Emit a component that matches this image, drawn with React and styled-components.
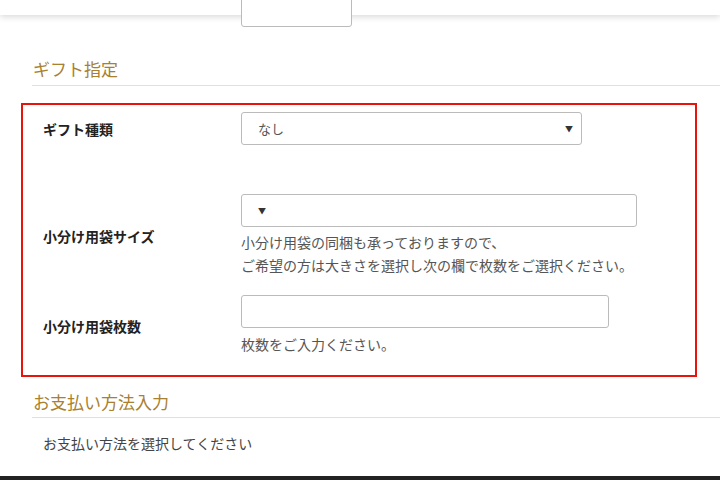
import React from "react";
import styled, { createGlobalStyle } from "styled-components";

const G = createGlobalStyle`
  body{margin:0;background:#fff;font-family:"Noto Sans CJK JP","Noto Sans",sans-serif;overflow:hidden;}
`;
const Page = styled.div`width:720px;height:480px;position:relative;overflow:hidden;`;
const TopBar = styled.div`height:15px;background:#fff;box-shadow:0 2px 6px rgba(0,0,0,.15);position:relative;z-index:1;`;
const TopSel = styled.div`position:absolute;left:241px;top:-12px;width:111px;height:39px;border:1px solid #bbb;border-radius:3px;box-sizing:border-box;background:#fff;`;
const Heading = styled.h2`
  margin:${p=>p.mt}px 0 0 32px;padding:0 0 0 1px;height:${p=>p.h}px;border-bottom:1px solid #e3e0da;
  font-family:"Noto Sans CJK JP",serif;font-weight:400;font-size:17px;color:#a8802f;line-height:${p=>p.h}px;
`;
const Box = styled.div`margin:17px 23px 0 21px;height:274px;border:2px solid #e8140c;box-sizing:border-box;
  display:flex;flex-direction:column;`;
const Row = styled.div`display:grid;grid-template-columns:218px 1fr;align-items:center;margin-top:${p=>p.mt}px;`;
const Label = styled.div`padding-left:20px;font-weight:700;font-size:14px;color:#222;`;
const Field = styled.div`display:flex;flex-direction:column;align-items:flex-start;`;
const Select = styled.div`width:${p=>p.w}px;height:33px;border:1px solid #bbb;border-radius:3px;box-sizing:border-box;
  display:flex;align-items:center;justify-content:space-between;padding:0 8px 0 16px;font-size:13px;color:#555;
  &::after{content:"▼";font-size:8px;color:#333;}`;
const Input = styled.div`width:368px;height:33px;border:1px solid #bbb;border-radius:3px;box-sizing:border-box;`;
const Help = styled.div`font-size:14px;color:#555;line-height:23px;margin-top:${p=>p.mt||0}px;`;
const Text = styled.div`margin:15px 0 0 43px;font-size:14px;color:#444;`;
const Bottom = styled.div`position:absolute;left:0;bottom:0;width:720px;height:4px;background:#222;`;

export default function App(){
  return <Page><G/>
    <TopBar><TopSel/></TopBar>
    <Heading mt={38} h={32}>ギフト指定</Heading>
    <Box>
      <Row mt={7}><Label>ギフト種類</Label><Field><Select w={341}>なし</Select></Field></Row>
      <Row mt={49}><Label>小分け用袋サイズ</Label><Field><Select w={396}/><Help mt={4}>小分け用袋の同梱も承っておりますので、<br/>ご希望の方は大きさを選択し次の欄で枚数をご選択ください。</Help></Field></Row>
      <Row mt={18}><Label>小分け用袋枚数</Label><Field><Input/><Help mt={5}>枚数をご入力ください。</Help></Field></Row>
    </Box>
    <Heading mt={9} h={31}>お支払い方法入力</Heading>
    <Text>お支払い方法を選択してください</Text>
    <Bottom/>
  </Page>;
}
